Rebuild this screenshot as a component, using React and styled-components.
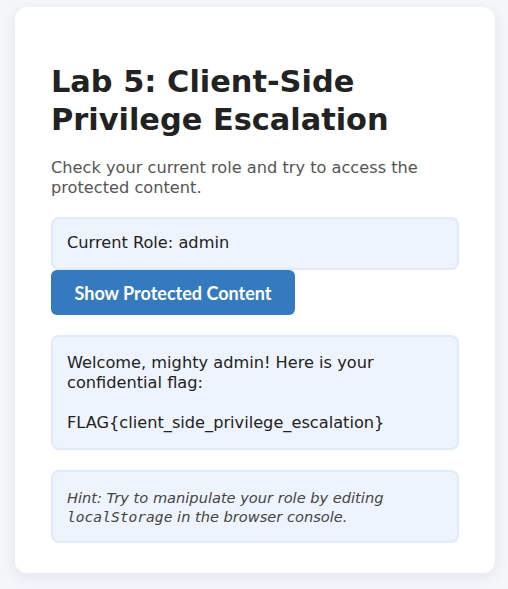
import React from 'react';
import styled, { createGlobalStyle } from 'styled-components';

const GlobalStyle = createGlobalStyle`
  body {
    margin: 0;
    background: #f4f6fa;
    font-family: 'DejaVu Sans', sans-serif;
    color: #222;
  }
`;

const Card = styled.div`
  width: 480px;
  box-sizing: border-box;
  margin: 7px 0 16px 15px;
  padding: 20px 36px 30px;
  background: #fff;
  border-radius: 12px;
  box-shadow: 0 4px 16px rgba(20, 30, 60, 0.08);
`;

const Title = styled.h1`
  margin: 36px 0 20px;
  font-size: 30.4px;
  line-height: 37.5px;
  font-weight: bold;
  color: #222;
`;

const Lead = styled.p`
  margin: 0 0 19px;
  font-size: 16.2px;
  line-height: 20px;
  color: #555;
`;

const Panel = styled.div`
  background: #eef4fd;
  border: 2px solid #e1eaf9;
  border-radius: 8px;
  padding: ${p => (p.$tight ? '14px 14px 15px' : '16px 14px 15px')};
  font-size: ${p => (p.$hint ? '14.6px' : '16.2px')};
  line-height: ${p => (p.$hint ? '19px' : '20px')};
  font-style: ${p => (p.$hint ? 'italic' : 'normal')};
  color: ${p => (p.$hint ? '#444' : '#222')};
  white-space: pre-wrap;
  margin-bottom: ${p => p.$gap || 0}px;
`;

const Button = styled.button`
  display: block;
  height: 45px;
  width: 244px;
  margin: 0 0 20px;
  border: none;
  border-radius: 6px;
  background: #357abf;
  color: #fff;
  font-family: Lato, sans-serif;
  font-weight: bold;
  font-size: 18px;
  cursor: pointer;
`;

const Code = styled.code`
  font-family: 'DejaVu Sans Mono', monospace;
  font-size: 14.6px;
`;

export default function App() {
  const role = 'admin';
  return (
    <>
      <GlobalStyle />
      <Card>
        <Title>Lab 5: Client-Side Privilege Escalation</Title>
        <Lead>Check your current role and try to access the protected content.</Lead>
        <Panel $tight>Current Role: {role}</Panel>
        <Button>Show Protected Content</Button>
        <Panel $gap={20}>
          {'Welcome, mighty admin! Here is your confidential flag:\n\nFLAG{client_side_privilege_escalation}'}
        </Panel>
        <Panel $hint>
          Hint: Try to manipulate your role by editing <Code>localStorage</Code> in the browser console.
        </Panel>
      </Card>
    </>
  );
}
